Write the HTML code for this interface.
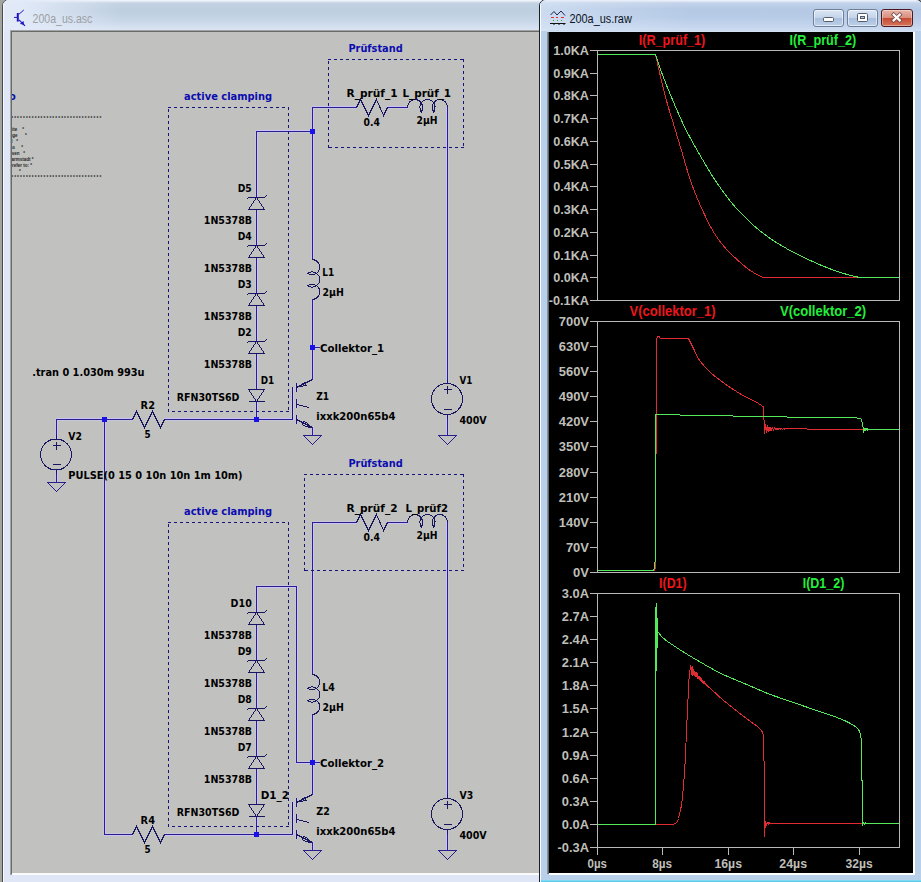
<!DOCTYPE html><html><head><meta charset="utf-8"><title>LTspice</title><style>
html,body{margin:0;padding:0;background:#a2a49f;}body{width:921px;height:882px;position:relative;overflow:hidden;font-family:'Liberation Sans',sans-serif}
svg{position:absolute;left:0;top:0}
</style></head><body>
<div id="lw" style="position:absolute;left:2px;top:-1px;width:560px;height:900px;border:1px solid #4a4d4e;border-radius:7px;box-sizing:border-box;background:#dfe6f5;overflow:hidden">
<div style="position:absolute;left:0;top:0;width:560px;height:31px;background:linear-gradient(to bottom,#f4f7fb 0,#e9eff7 1px,#c3d2e2 3px,#bccedf 11px,#c8d7e8 21px,#d9e4f3 29px,#d9e4f3 31px)"></div>
<div style="position:absolute;left:0;top:0;width:120px;height:31px;background:linear-gradient(to right,rgba(226,234,248,1) 0,rgba(226,234,248,.95) 20px,rgba(226,234,248,0) 120px)"></div>
<div style="position:absolute;left:0;top:0;width:1px;height:900px;background:#f6f8fc"></div>
<div style="position:absolute;left:1px;top:31px;width:8px;height:870px;background:#dfe6f5"></div>
</div>
<div style="position:absolute;left:10px;top:30px;width:540px;height:845px;background:#a3a5a4"></div>
<div style="position:absolute;left:11px;top:31px;width:540px;height:843px;background:#686b6a"></div>
<div style="position:absolute;left:12px;top:873px;width:540px;height:2px;background:#fafbfd"></div>
<div style="position:absolute;left:12px;top:32px;width:527px;height:841px;background:#c1c2bf"></div>
<svg width="120" height="32" viewBox="0 0 120 32" style="position:absolute;left:0;top:0">
<text x="32.6" y="22.8" font-family="'Liberation Sans',sans-serif" font-size="12" fill="#9c9fa4" textLength="59.8" lengthAdjust="spacingAndGlyphs">200a_us.asc</text>
<g stroke="#1c14c0" fill="none">
<path d="M17.8,13 V21.6" stroke-width="2"/>
<path d="M14,17.4 H17" stroke-width="1"/>
<path d="M19,14.2 L23.8,10" stroke-width="1"/>
<path d="M19,19.8 L25,25.8" stroke-width="1.2"/>
<path d="M20.4,23.6 L23.4,21.6 L23.6,24.6 Z" fill="#1c14c0" stroke-width="0.6"/>
</g></svg>

<svg width="921" height="882" viewBox="0 0 921 882">
<defs><clipPath id="cl"><rect x="12" y="32" width="527" height="841"/></clipPath></defs>
<g clip-path="url(#cl)">
<g shape-rendering="crispEdges" fill="#c8c2f8"><rect x="257" y="187" width="1" height="11"/><rect x="255" y="187" width="1" height="11" fill="#c6c5da"/><rect x="257" y="209" width="1" height="11"/><rect x="255" y="209" width="1" height="11" fill="#c6c5da"/><rect x="257" y="219" width="1" height="17"/><rect x="255" y="219" width="1" height="17" fill="#c6c5da"/><rect x="257" y="235" width="1" height="11"/><rect x="255" y="235" width="1" height="11" fill="#c6c5da"/><rect x="257" y="257" width="1" height="11"/><rect x="255" y="257" width="1" height="11" fill="#c6c5da"/><rect x="257" y="267" width="1" height="17"/><rect x="255" y="267" width="1" height="17" fill="#c6c5da"/><rect x="257" y="283" width="1" height="11"/><rect x="255" y="283" width="1" height="11" fill="#c6c5da"/><rect x="257" y="305" width="1" height="11"/><rect x="255" y="305" width="1" height="11" fill="#c6c5da"/><rect x="257" y="315" width="1" height="17"/><rect x="255" y="315" width="1" height="17" fill="#c6c5da"/><rect x="257" y="331" width="1" height="11"/><rect x="255" y="331" width="1" height="11" fill="#c6c5da"/><rect x="257" y="353" width="1" height="11"/><rect x="255" y="353" width="1" height="11" fill="#c6c5da"/><rect x="257" y="363" width="1" height="17"/><rect x="255" y="363" width="1" height="17" fill="#c6c5da"/><rect x="257" y="379" width="1" height="11"/><rect x="255" y="379" width="1" height="11" fill="#c6c5da"/><rect x="257" y="401" width="1" height="11"/><rect x="255" y="401" width="1" height="11" fill="#c6c5da"/><rect x="257" y="411" width="1" height="9"/><rect x="255" y="411" width="1" height="9" fill="#c6c5da"/><rect x="256" y="130" width="57" height="1"/><rect x="256" y="132" width="57" height="1" fill="#c6c5da"/><rect x="257" y="131" width="1" height="57"/><rect x="255" y="131" width="1" height="57" fill="#c6c5da"/><rect x="313" y="107" width="1" height="153"/><rect x="311" y="107" width="1" height="153" fill="#c6c5da"/><rect x="313" y="299" width="1" height="81"/><rect x="311" y="299" width="1" height="81" fill="#c6c5da"/><rect x="312" y="346" width="8" height="1"/><rect x="312" y="348" width="8" height="1" fill="#c6c5da"/><rect x="312" y="106" width="41" height="1"/><rect x="312" y="108" width="41" height="1" fill="#c6c5da"/><rect x="352" y="106" width="5" height="1"/><rect x="352" y="108" width="5" height="1" fill="#c6c5da"/><rect x="387" y="106" width="5" height="1"/><rect x="387" y="108" width="5" height="1" fill="#c6c5da"/><rect x="391" y="106" width="17" height="1"/><rect x="391" y="108" width="17" height="1" fill="#c6c5da"/><rect x="446" y="107" width="1" height="273"/><rect x="448" y="107" width="1" height="273" fill="#c6c5da"/><rect x="446" y="379" width="1" height="5"/><rect x="448" y="379" width="1" height="5" fill="#c6c5da"/><rect x="446" y="415" width="1" height="5"/><rect x="448" y="415" width="1" height="5" fill="#c6c5da"/><rect x="446" y="419" width="1" height="17"/><rect x="448" y="419" width="1" height="17" fill="#c6c5da"/><rect x="293" y="387" width="1" height="33"/><rect x="291" y="387" width="1" height="33" fill="#c6c5da"/><rect x="297" y="383" width="1" height="9"/><rect x="295" y="383" width="1" height="9" fill="#c6c5da"/><rect x="297" y="399" width="1" height="9"/><rect x="295" y="399" width="1" height="9" fill="#c6c5da"/><rect x="297" y="415" width="1" height="9"/><rect x="295" y="415" width="1" height="9" fill="#c6c5da"/><rect x="313" y="427" width="1" height="9"/><rect x="311" y="427" width="1" height="9" fill="#c6c5da"/><rect x="128" y="418" width="5" height="1"/><rect x="128" y="420" width="5" height="1" fill="#c6c5da"/><rect x="164" y="418" width="5" height="1"/><rect x="164" y="420" width="5" height="1" fill="#c6c5da"/><rect x="168" y="418" width="125" height="1"/><rect x="168" y="420" width="125" height="1" fill="#c6c5da"/><rect x="257" y="602" width="1" height="11"/><rect x="255" y="602" width="1" height="11" fill="#c6c5da"/><rect x="257" y="624" width="1" height="11"/><rect x="255" y="624" width="1" height="11" fill="#c6c5da"/><rect x="257" y="634" width="1" height="17"/><rect x="255" y="634" width="1" height="17" fill="#c6c5da"/><rect x="257" y="650" width="1" height="11"/><rect x="255" y="650" width="1" height="11" fill="#c6c5da"/><rect x="257" y="672" width="1" height="11"/><rect x="255" y="672" width="1" height="11" fill="#c6c5da"/><rect x="257" y="682" width="1" height="17"/><rect x="255" y="682" width="1" height="17" fill="#c6c5da"/><rect x="257" y="698" width="1" height="11"/><rect x="255" y="698" width="1" height="11" fill="#c6c5da"/><rect x="257" y="720" width="1" height="11"/><rect x="255" y="720" width="1" height="11" fill="#c6c5da"/><rect x="257" y="730" width="1" height="17"/><rect x="255" y="730" width="1" height="17" fill="#c6c5da"/><rect x="257" y="746" width="1" height="11"/><rect x="255" y="746" width="1" height="11" fill="#c6c5da"/><rect x="257" y="768" width="1" height="11"/><rect x="255" y="768" width="1" height="11" fill="#c6c5da"/><rect x="257" y="778" width="1" height="17"/><rect x="255" y="778" width="1" height="17" fill="#c6c5da"/><rect x="257" y="794" width="1" height="11"/><rect x="255" y="794" width="1" height="11" fill="#c6c5da"/><rect x="257" y="816" width="1" height="11"/><rect x="255" y="816" width="1" height="11" fill="#c6c5da"/><rect x="257" y="826" width="1" height="9"/><rect x="255" y="826" width="1" height="9" fill="#c6c5da"/><rect x="256" y="587" width="41" height="1"/><rect x="256" y="585" width="41" height="1" fill="#c6c5da"/><rect x="257" y="586" width="1" height="17"/><rect x="255" y="586" width="1" height="17" fill="#c6c5da"/><rect x="297" y="586" width="1" height="177"/><rect x="295" y="586" width="1" height="177" fill="#c6c5da"/><rect x="296" y="763" width="17" height="1"/><rect x="296" y="761" width="17" height="1" fill="#c6c5da"/><rect x="313" y="522" width="1" height="153"/><rect x="311" y="522" width="1" height="153" fill="#c6c5da"/><rect x="313" y="714" width="1" height="81"/><rect x="311" y="714" width="1" height="81" fill="#c6c5da"/><rect x="312" y="763" width="8" height="1"/><rect x="312" y="761" width="8" height="1" fill="#c6c5da"/><rect x="312" y="523" width="41" height="1"/><rect x="312" y="521" width="41" height="1" fill="#c6c5da"/><rect x="352" y="523" width="5" height="1"/><rect x="352" y="521" width="5" height="1" fill="#c6c5da"/><rect x="387" y="523" width="5" height="1"/><rect x="387" y="521" width="5" height="1" fill="#c6c5da"/><rect x="391" y="523" width="17" height="1"/><rect x="391" y="521" width="17" height="1" fill="#c6c5da"/><rect x="446" y="522" width="1" height="273"/><rect x="448" y="522" width="1" height="273" fill="#c6c5da"/><rect x="446" y="794" width="1" height="5"/><rect x="448" y="794" width="1" height="5" fill="#c6c5da"/><rect x="446" y="830" width="1" height="5"/><rect x="448" y="830" width="1" height="5" fill="#c6c5da"/><rect x="446" y="834" width="1" height="17"/><rect x="448" y="834" width="1" height="17" fill="#c6c5da"/><rect x="293" y="802" width="1" height="33"/><rect x="291" y="802" width="1" height="33" fill="#c6c5da"/><rect x="297" y="798" width="1" height="9"/><rect x="295" y="798" width="1" height="9" fill="#c6c5da"/><rect x="297" y="814" width="1" height="9"/><rect x="295" y="814" width="1" height="9" fill="#c6c5da"/><rect x="297" y="830" width="1" height="9"/><rect x="295" y="830" width="1" height="9" fill="#c6c5da"/><rect x="313" y="842" width="1" height="9"/><rect x="311" y="842" width="1" height="9" fill="#c6c5da"/><rect x="128" y="835" width="5" height="1"/><rect x="128" y="833" width="5" height="1" fill="#c6c5da"/><rect x="164" y="835" width="5" height="1"/><rect x="164" y="833" width="5" height="1" fill="#c6c5da"/><rect x="168" y="835" width="125" height="1"/><rect x="168" y="833" width="125" height="1" fill="#c6c5da"/><rect x="56" y="418" width="73" height="1"/><rect x="56" y="420" width="73" height="1" fill="#c6c5da"/><rect x="57" y="419" width="1" height="17"/><rect x="55" y="419" width="1" height="17" fill="#c6c5da"/><rect x="57" y="435" width="1" height="5"/><rect x="55" y="435" width="1" height="5" fill="#c6c5da"/><rect x="57" y="470" width="1" height="5"/><rect x="55" y="470" width="1" height="5" fill="#c6c5da"/><rect x="57" y="474" width="1" height="9"/><rect x="55" y="474" width="1" height="9" fill="#c6c5da"/><rect x="105" y="419" width="1" height="416"/><rect x="103" y="419" width="1" height="416" fill="#c6c5da"/><rect x="104" y="835" width="25" height="1"/><rect x="104" y="833" width="25" height="1" fill="#c6c5da"/></g>
<g shape-rendering="crispEdges"><rect x="256" y="187" width="1" height="11" fill="#2a1e8c"/><rect x="256" y="209" width="1" height="11" fill="#2a1e8c"/><polygon points="248.5,209.5 264.5,209.5 256.5,197.5" fill="none" stroke="#17165f" stroke-width="1"/><polyline points="246.5,199.5 248.5,197.5 264.5,197.5 266.5,195.5" fill="none" stroke="#17165f" stroke-width="1"/><rect x="256" y="219" width="1" height="17" fill="#2a1e8c"/><rect x="256" y="235" width="1" height="11" fill="#2a1e8c"/><rect x="256" y="257" width="1" height="11" fill="#2a1e8c"/><polygon points="248.5,257.5 264.5,257.5 256.5,245.5" fill="none" stroke="#17165f" stroke-width="1"/><polyline points="246.5,247.5 248.5,245.5 264.5,245.5 266.5,243.5" fill="none" stroke="#17165f" stroke-width="1"/><rect x="256" y="267" width="1" height="17" fill="#2a1e8c"/><rect x="256" y="283" width="1" height="11" fill="#2a1e8c"/><rect x="256" y="305" width="1" height="11" fill="#2a1e8c"/><polygon points="248.5,305.5 264.5,305.5 256.5,293.5" fill="none" stroke="#17165f" stroke-width="1"/><polyline points="246.5,295.5 248.5,293.5 264.5,293.5 266.5,291.5" fill="none" stroke="#17165f" stroke-width="1"/><rect x="256" y="315" width="1" height="17" fill="#2a1e8c"/><rect x="256" y="331" width="1" height="11" fill="#2a1e8c"/><rect x="256" y="353" width="1" height="11" fill="#2a1e8c"/><polygon points="248.5,353.5 264.5,353.5 256.5,341.5" fill="none" stroke="#17165f" stroke-width="1"/><polyline points="246.5,343.5 248.5,341.5 264.5,341.5 266.5,339.5" fill="none" stroke="#17165f" stroke-width="1"/><rect x="256" y="363" width="1" height="17" fill="#2a1e8c"/><rect x="256" y="379" width="1" height="11" fill="#2a1e8c"/><rect x="256" y="401" width="1" height="11" fill="#2a1e8c"/><polygon points="248.5,389.5 264.5,389.5 256.5,401.5" fill="none" stroke="#17165f" stroke-width="1"/><polyline points="248.5,401.5 264.5,401.5" fill="none" stroke="#17165f" stroke-width="1"/><rect x="256" y="411" width="1" height="9" fill="#2a1e8c"/><rect x="256" y="131" width="57" height="1" fill="#2a1e8c"/><rect x="256" y="131" width="1" height="57" fill="#2a1e8c"/><rect x="312" y="107" width="1" height="153" fill="#2a1e8c"/><path d="M312.5,259.5 A8.0,7.6 0 1 1 307.27,273.30 A8.0,7.6 0 1 1 307.27,285.70 A8.0,7.6 0 1 1 312.5,299.5" fill="none" stroke="#17165f" stroke-width="1"/><rect x="312" y="299" width="1" height="81" fill="#2a1e8c"/><rect x="312" y="347" width="8" height="1" fill="#2a1e8c"/><rect x="312" y="107" width="41" height="1" fill="#2a1e8c"/><rect x="352" y="107" width="5" height="1" fill="#2a1e8c"/><rect x="387" y="107" width="5" height="1" fill="#2a1e8c"/><polyline points="356.5,107.5 360.5,99.5 368.5,115.5 376.5,99.5 383.5,115.5 387.5,107.5" fill="none" stroke="#17165f" stroke-width="1"/><rect x="391" y="107" width="17" height="1" fill="#2a1e8c"/><path d="M407.5,107.5 A7.6,8.0 0 1 1 421.30,112.13 A7.6,8.0 0 1 1 433.70,112.13 A7.6,8.0 0 1 1 447.5,107.5" fill="none" stroke="#17165f" stroke-width="1"/><rect x="447" y="107" width="1" height="273" fill="#2a1e8c"/><rect x="447" y="379" width="1" height="5" fill="#17165f"/><rect x="447" y="415" width="1" height="5" fill="#17165f"/><circle cx="447.0" cy="399.0" r="15.5" fill="none" stroke="#17165f" stroke-width="1"/><polyline points="443.5,389.5 451.5,389.5" fill="none" stroke="#17165f" stroke-width="1"/><polyline points="447.5,385.5 447.5,393.5" fill="none" stroke="#17165f" stroke-width="1"/><polyline points="443.5,409.5 451.5,409.5" fill="none" stroke="#17165f" stroke-width="1"/><rect x="447" y="419" width="1" height="17" fill="#2a1e8c"/><polygon points="438.5,435.5 456.5,435.5 447.5,444.5" fill="none" stroke="#2a1e8c" stroke-width="1"/><rect x="292" y="387" width="1" height="33" fill="#17165f"/><rect x="296" y="383" width="1" height="9" fill="#17165f"/><rect x="296" y="399" width="1" height="9" fill="#17165f"/><rect x="296" y="415" width="1" height="9" fill="#17165f"/><polyline points="296.5,387.5 312.5,379.5" fill="none" stroke="#17165f" stroke-width="1"/><polyline points="299.5,386.5 306.5,385.5 304.5,382.5 299.5,386.5" fill="none" stroke="#17165f" stroke-width="1"/><polyline points="296.5,404.5 309.5,407.5" fill="none" stroke="#17165f" stroke-width="1"/><polyline points="296.5,419.5 312.5,427.5" fill="none" stroke="#17165f" stroke-width="1"/><polyline points="311.5,427.5 306.5,422.5 303.5,421.5 302.5,424.5 305.5,426.5 311.5,427.5" fill="none" stroke="#17165f" stroke-width="1"/><rect x="312" y="427" width="1" height="9" fill="#2a1e8c"/><polygon points="303.5,435.5 321.5,435.5 312.5,444.5" fill="none" stroke="#2a1e8c" stroke-width="1"/><rect x="128" y="419" width="5" height="1" fill="#2a1e8c"/><rect x="164" y="419" width="5" height="1" fill="#2a1e8c"/><polyline points="132.5,419.5 136.5,411.5 144.5,427.5 152.5,411.5 160.5,427.5 164.5,419.5" fill="none" stroke="#17165f" stroke-width="1"/><rect x="168" y="419" width="125" height="1" fill="#2a1e8c"/><rect x="256" y="602" width="1" height="11" fill="#2a1e8c"/><rect x="256" y="624" width="1" height="11" fill="#2a1e8c"/><polygon points="248.5,624.5 264.5,624.5 256.5,612.5" fill="none" stroke="#17165f" stroke-width="1"/><polyline points="246.5,614.5 248.5,612.5 264.5,612.5 266.5,610.5" fill="none" stroke="#17165f" stroke-width="1"/><rect x="256" y="634" width="1" height="17" fill="#2a1e8c"/><rect x="256" y="650" width="1" height="11" fill="#2a1e8c"/><rect x="256" y="672" width="1" height="11" fill="#2a1e8c"/><polygon points="248.5,672.5 264.5,672.5 256.5,660.5" fill="none" stroke="#17165f" stroke-width="1"/><polyline points="246.5,662.5 248.5,660.5 264.5,660.5 266.5,658.5" fill="none" stroke="#17165f" stroke-width="1"/><rect x="256" y="682" width="1" height="17" fill="#2a1e8c"/><rect x="256" y="698" width="1" height="11" fill="#2a1e8c"/><rect x="256" y="720" width="1" height="11" fill="#2a1e8c"/><polygon points="248.5,720.5 264.5,720.5 256.5,708.5" fill="none" stroke="#17165f" stroke-width="1"/><polyline points="246.5,710.5 248.5,708.5 264.5,708.5 266.5,706.5" fill="none" stroke="#17165f" stroke-width="1"/><rect x="256" y="730" width="1" height="17" fill="#2a1e8c"/><rect x="256" y="746" width="1" height="11" fill="#2a1e8c"/><rect x="256" y="768" width="1" height="11" fill="#2a1e8c"/><polygon points="248.5,768.5 264.5,768.5 256.5,756.5" fill="none" stroke="#17165f" stroke-width="1"/><polyline points="246.5,758.5 248.5,756.5 264.5,756.5 266.5,754.5" fill="none" stroke="#17165f" stroke-width="1"/><rect x="256" y="778" width="1" height="17" fill="#2a1e8c"/><rect x="256" y="794" width="1" height="11" fill="#2a1e8c"/><rect x="256" y="816" width="1" height="11" fill="#2a1e8c"/><polygon points="248.5,804.5 264.5,804.5 256.5,816.5" fill="none" stroke="#17165f" stroke-width="1"/><polyline points="248.5,816.5 264.5,816.5" fill="none" stroke="#17165f" stroke-width="1"/><rect x="256" y="826" width="1" height="9" fill="#2a1e8c"/><rect x="256" y="586" width="41" height="1" fill="#2a1e8c"/><rect x="256" y="586" width="1" height="17" fill="#2a1e8c"/><rect x="296" y="586" width="1" height="177" fill="#2a1e8c"/><rect x="296" y="762" width="17" height="1" fill="#2a1e8c"/><rect x="312" y="522" width="1" height="153" fill="#2a1e8c"/><path d="M312.5,674.5 A8.0,7.6 0 1 1 307.27,688.30 A8.0,7.6 0 1 1 307.27,700.70 A8.0,7.6 0 1 1 312.5,714.5" fill="none" stroke="#17165f" stroke-width="1"/><rect x="312" y="714" width="1" height="81" fill="#2a1e8c"/><rect x="312" y="762" width="8" height="1" fill="#2a1e8c"/><rect x="312" y="522" width="41" height="1" fill="#2a1e8c"/><rect x="352" y="522" width="5" height="1" fill="#2a1e8c"/><rect x="387" y="522" width="5" height="1" fill="#2a1e8c"/><polyline points="356.5,522.5 360.5,514.5 368.5,530.5 376.5,514.5 383.5,530.5 387.5,522.5" fill="none" stroke="#17165f" stroke-width="1"/><rect x="391" y="522" width="17" height="1" fill="#2a1e8c"/><path d="M407.5,522.5 A7.6,8.0 0 1 1 421.30,527.13 A7.6,8.0 0 1 1 433.70,527.13 A7.6,8.0 0 1 1 447.5,522.5" fill="none" stroke="#17165f" stroke-width="1"/><rect x="447" y="522" width="1" height="273" fill="#2a1e8c"/><rect x="447" y="794" width="1" height="5" fill="#17165f"/><rect x="447" y="830" width="1" height="5" fill="#17165f"/><circle cx="447.0" cy="814.0" r="15.5" fill="none" stroke="#17165f" stroke-width="1"/><polyline points="443.5,804.5 451.5,804.5" fill="none" stroke="#17165f" stroke-width="1"/><polyline points="447.5,800.5 447.5,808.5" fill="none" stroke="#17165f" stroke-width="1"/><polyline points="443.5,824.5 451.5,824.5" fill="none" stroke="#17165f" stroke-width="1"/><rect x="447" y="834" width="1" height="17" fill="#2a1e8c"/><polygon points="438.5,850.5 456.5,850.5 447.5,859.5" fill="none" stroke="#2a1e8c" stroke-width="1"/><rect x="292" y="802" width="1" height="33" fill="#17165f"/><rect x="296" y="798" width="1" height="9" fill="#17165f"/><rect x="296" y="814" width="1" height="9" fill="#17165f"/><rect x="296" y="830" width="1" height="9" fill="#17165f"/><polyline points="296.5,802.5 312.5,794.5" fill="none" stroke="#17165f" stroke-width="1"/><polyline points="299.5,801.5 306.5,800.5 304.5,797.5 299.5,801.5" fill="none" stroke="#17165f" stroke-width="1"/><polyline points="296.5,819.5 309.5,822.5" fill="none" stroke="#17165f" stroke-width="1"/><polyline points="296.5,834.5 312.5,842.5" fill="none" stroke="#17165f" stroke-width="1"/><polyline points="311.5,842.5 306.5,837.5 303.5,836.5 302.5,839.5 305.5,841.5 311.5,842.5" fill="none" stroke="#17165f" stroke-width="1"/><rect x="312" y="842" width="1" height="9" fill="#2a1e8c"/><polygon points="303.5,850.5 321.5,850.5 312.5,859.5" fill="none" stroke="#2a1e8c" stroke-width="1"/><rect x="128" y="834" width="5" height="1" fill="#2a1e8c"/><rect x="164" y="834" width="5" height="1" fill="#2a1e8c"/><polyline points="132.5,834.5 136.5,826.5 144.5,842.5 152.5,826.5 160.5,842.5 164.5,834.5" fill="none" stroke="#17165f" stroke-width="1"/><rect x="168" y="834" width="125" height="1" fill="#2a1e8c"/><line x1="168" y1="107.5" x2="289" y2="107.5" stroke="#15147c" stroke-width="1" stroke-dasharray="3 3"/><line x1="288.5" y1="107" x2="288.5" y2="412" stroke="#15147c" stroke-width="1" stroke-dasharray="3 3"/><line x1="289" y1="411.5" x2="168" y2="411.5" stroke="#15147c" stroke-width="1" stroke-dasharray="3 3"/><line x1="168.5" y1="412" x2="168.5" y2="107" stroke="#15147c" stroke-width="1" stroke-dasharray="3 3"/><line x1="168" y1="522.5" x2="289" y2="522.5" stroke="#15147c" stroke-width="1" stroke-dasharray="3 3"/><line x1="288.5" y1="522" x2="288.5" y2="827" stroke="#15147c" stroke-width="1" stroke-dasharray="3 3"/><line x1="289" y1="826.5" x2="168" y2="826.5" stroke="#15147c" stroke-width="1" stroke-dasharray="3 3"/><line x1="168.5" y1="827" x2="168.5" y2="522" stroke="#15147c" stroke-width="1" stroke-dasharray="3 3"/><line x1="328" y1="59.5" x2="464" y2="59.5" stroke="#15147c" stroke-width="1" stroke-dasharray="3 3"/><line x1="463.5" y1="59" x2="463.5" y2="148" stroke="#15147c" stroke-width="1" stroke-dasharray="3 3"/><line x1="464" y1="147.5" x2="328" y2="147.5" stroke="#15147c" stroke-width="1" stroke-dasharray="3 3"/><line x1="328.5" y1="148" x2="328.5" y2="59" stroke="#15147c" stroke-width="1" stroke-dasharray="3 3"/><line x1="304" y1="474.5" x2="464" y2="474.5" stroke="#15147c" stroke-width="1" stroke-dasharray="3 3"/><line x1="463.5" y1="474" x2="463.5" y2="571" stroke="#15147c" stroke-width="1" stroke-dasharray="3 3"/><line x1="464" y1="570.5" x2="304" y2="570.5" stroke="#15147c" stroke-width="1" stroke-dasharray="3 3"/><line x1="304.5" y1="571" x2="304.5" y2="474" stroke="#15147c" stroke-width="1" stroke-dasharray="3 3"/><rect x="56" y="419" width="73" height="1" fill="#2a1e8c"/><rect x="56" y="419" width="1" height="17" fill="#2a1e8c"/><rect x="56" y="435" width="1" height="5" fill="#17165f"/><rect x="56" y="470" width="1" height="5" fill="#17165f"/><circle cx="56.0" cy="454.5" r="15.5" fill="none" stroke="#17165f" stroke-width="1"/><polyline points="52.5,445.5 60.5,445.5" fill="none" stroke="#17165f" stroke-width="1"/><polyline points="56.5,441.5 56.5,449.5" fill="none" stroke="#17165f" stroke-width="1"/><polyline points="52.5,464.5 60.5,464.5" fill="none" stroke="#17165f" stroke-width="1"/><rect x="56" y="474" width="1" height="9" fill="#2a1e8c"/><polygon points="47.5,482.5 65.5,482.5 56.5,491.5" fill="none" stroke="#2a1e8c" stroke-width="1"/><rect x="104" y="419" width="1" height="416" fill="#2a1e8c"/><rect x="104" y="834" width="25" height="1" fill="#2a1e8c"/><rect x="254" y="417" width="5" height="5" fill="#1a10e8"/><rect x="310" y="129" width="5" height="5" fill="#1a10e8"/><rect x="310" y="345" width="5" height="5" fill="#1a10e8"/><rect x="254" y="832" width="5" height="5" fill="#1a10e8"/><rect x="310" y="760" width="5" height="5" fill="#1a10e8"/><rect x="102" y="417" width="5" height="5" fill="#1a10e8"/></g>
<g font-family="'DejaVu Sans Condensed','Liberation Sans',sans-serif" font-weight="bold" font-size="11" fill="#000"><text x="251.8" y="192" textLength="14.1" lengthAdjust="spacingAndGlyphs" text-anchor="end">D5</text><text x="203.8" y="224" textLength="48.3" lengthAdjust="spacingAndGlyphs">1N5378B</text><text x="251.8" y="240" textLength="14.1" lengthAdjust="spacingAndGlyphs" text-anchor="end">D4</text><text x="203.8" y="272" textLength="48.3" lengthAdjust="spacingAndGlyphs">1N5378B</text><text x="251.8" y="288" textLength="14.1" lengthAdjust="spacingAndGlyphs" text-anchor="end">D3</text><text x="203.8" y="320" textLength="48.3" lengthAdjust="spacingAndGlyphs">1N5378B</text><text x="251.8" y="336" textLength="14.1" lengthAdjust="spacingAndGlyphs" text-anchor="end">D2</text><text x="203.8" y="368" textLength="48.3" lengthAdjust="spacingAndGlyphs">1N5378B</text><text x="260.7" y="384" textLength="13.5" lengthAdjust="spacingAndGlyphs">D1</text><text x="176.7" y="401" textLength="62.8" lengthAdjust="spacingAndGlyphs">RFN30TS6D</text><text x="320.1" y="352" textLength="64" lengthAdjust="spacingAndGlyphs">Collektor_1</text><text x="322.3" y="276" textLength="11.9" lengthAdjust="spacingAndGlyphs">L1</text><text x="322.5" y="296" textLength="21.3" lengthAdjust="spacingAndGlyphs">2µH</text><text x="346.6" y="97" textLength="51.0" lengthAdjust="spacingAndGlyphs">R_prüf_1</text><text x="402.4" y="97" textLength="48.7" lengthAdjust="spacingAndGlyphs">L_prüf_1</text><text x="363.6" y="126" textLength="16.4" lengthAdjust="spacingAndGlyphs">0.4</text><text x="416.6" y="124" textLength="21" lengthAdjust="spacingAndGlyphs">2µH</text><text x="459.5" y="384" textLength="12.9" lengthAdjust="spacingAndGlyphs">V1</text><text x="459.5" y="424" textLength="27.2" lengthAdjust="spacingAndGlyphs">400V</text><text x="316.3" y="400" textLength="12.8" lengthAdjust="spacingAndGlyphs">Z1</text><text x="316.3" y="420" textLength="79.2" lengthAdjust="spacingAndGlyphs">ixxk200n65b4</text><text x="140.6" y="409" textLength="14.4" lengthAdjust="spacingAndGlyphs">R2</text><text x="144.6" y="438" textLength="6.1" lengthAdjust="spacingAndGlyphs">5</text><text x="184.1" y="100" fill="#0c0cb0" textLength="88" lengthAdjust="spacingAndGlyphs">active clamping</text><text x="348.4" y="52" fill="#0c0cb0" textLength="54.3" lengthAdjust="spacingAndGlyphs">Prüfstand</text><text x="251.8" y="607" textLength="21.2" lengthAdjust="spacingAndGlyphs" text-anchor="end">D10</text><text x="203.8" y="639" textLength="48.3" lengthAdjust="spacingAndGlyphs">1N5378B</text><text x="251.8" y="655" textLength="14.1" lengthAdjust="spacingAndGlyphs" text-anchor="end">D9</text><text x="203.8" y="687" textLength="48.3" lengthAdjust="spacingAndGlyphs">1N5378B</text><text x="251.8" y="703" textLength="14.1" lengthAdjust="spacingAndGlyphs" text-anchor="end">D8</text><text x="203.8" y="735" textLength="48.3" lengthAdjust="spacingAndGlyphs">1N5378B</text><text x="251.8" y="751" textLength="14.1" lengthAdjust="spacingAndGlyphs" text-anchor="end">D7</text><text x="203.8" y="783" textLength="48.3" lengthAdjust="spacingAndGlyphs">1N5378B</text><text x="260.7" y="799" textLength="28.3" lengthAdjust="spacingAndGlyphs">D1_2</text><text x="176.7" y="816" textLength="62.8" lengthAdjust="spacingAndGlyphs">RFN30TS6D</text><text x="320.1" y="767" textLength="64" lengthAdjust="spacingAndGlyphs">Collektor_2</text><text x="322.3" y="691" textLength="12.6" lengthAdjust="spacingAndGlyphs">L4</text><text x="322.5" y="711" textLength="21.3" lengthAdjust="spacingAndGlyphs">2µH</text><text x="346.6" y="512" textLength="51.0" lengthAdjust="spacingAndGlyphs">R_prüf_2</text><text x="405.5" y="512" textLength="42.5" lengthAdjust="spacingAndGlyphs">L_prüf2</text><text x="363.6" y="541" textLength="16.4" lengthAdjust="spacingAndGlyphs">0.4</text><text x="416.6" y="539" textLength="21" lengthAdjust="spacingAndGlyphs">2µH</text><text x="459.5" y="799" textLength="13.7" lengthAdjust="spacingAndGlyphs">V3</text><text x="459.5" y="839" textLength="27.2" lengthAdjust="spacingAndGlyphs">400V</text><text x="316.3" y="815" textLength="13.5" lengthAdjust="spacingAndGlyphs">Z2</text><text x="316.3" y="835" textLength="79.2" lengthAdjust="spacingAndGlyphs">ixxk200n65b4</text><text x="140.6" y="824" textLength="14.4" lengthAdjust="spacingAndGlyphs">R4</text><text x="144.6" y="853" textLength="6.1" lengthAdjust="spacingAndGlyphs">5</text><text x="184.1" y="515" fill="#0c0cb0" textLength="88" lengthAdjust="spacingAndGlyphs">active clamping</text><text x="348.4" y="467" fill="#0c0cb0" textLength="54.3" lengthAdjust="spacingAndGlyphs">Prüfstand</text><text x="68.3" y="440" textLength="13.7" lengthAdjust="spacingAndGlyphs">V2</text><text x="68.3" y="479" textLength="174.3" lengthAdjust="spacingAndGlyphs">PULSE(0 15 0 10n 10n 1m 10m)</text><text x="32.2" y="376" textLength="112.4" lengthAdjust="spacingAndGlyphs">.tran 0 1.030m 993u</text><text x="9.0" y="100" fill="#0c0cb0">o</text></g>
<g font-family="'Liberation Sans',sans-serif" font-size="4.6" fill="#222" font-weight="bold">
<text x="11.2" y="119.6" textLength="90" lengthAdjust="spacing">*******************************</text>
<text x="11.2" y="179.4" textLength="90" lengthAdjust="spacing">*******************************</text>
</g>
<g font-family="'Liberation Sans',sans-serif" font-size="4.5" fill="#262626" font-weight="bold">
<text x="9.6" y="131" xml:space="preserve">site    *</text>
<text x="9.7" y="137" xml:space="preserve">age      *</text>
<text x="11.3" y="143" xml:space="preserve">l   *</text>
<text x="10.1" y="149" xml:space="preserve">as     *</text>
<text x="6.4" y="155" xml:space="preserve">haven   *</text>
<text x="2.9" y="161" xml:space="preserve">tu-darmstadt *</text>
<text x="8.9" y="167" xml:space="preserve">* refer to: *</text>
<text x="12.7" y="173" xml:space="preserve">     *</text>
</g>

</g></svg>
<div id="rw" style="position:absolute;left:539px;top:-1px;width:384px;height:900px;border:1px solid #1c1e26;border-radius:7px 7px 0 0;box-sizing:border-box;background:#b9d0ea;overflow:hidden">
<div style="position:absolute;left:0;top:0;width:400px;height:31px;background:linear-gradient(to bottom,#f4f7fc 0,#e2eaf6 1px,#c3d3ea 3px,#b5c9e5 9px,#b7cbe7 17px,#c4d5ed 26px,#cfddf2 31px)"></div>
<div style="position:absolute;left:0;top:0;width:150px;height:31px;background:linear-gradient(to right,rgba(222,233,248,.55) 0,rgba(222,233,248,.3) 60px,rgba(222,233,248,0) 150px)"></div>
<div style="position:absolute;left:0;top:0;width:1px;height:900px;background:#f8fbff"></div>
</div>
<div style="position:absolute;left:541px;top:880px;width:380px;height:2px;background:linear-gradient(to bottom,#8fe0f6,#4cc4e8)"></div>
<div style="position:absolute;left:547px;top:31px;width:2px;height:843px;background:linear-gradient(to right,#9aa6b4,#4e5258)"></div>
<div style="position:absolute;left:547px;top:30px;width:368px;height:2px;background:linear-gradient(to bottom,#c9d9ee,#d6e2f2)"></div>
<div style="position:absolute;left:549px;top:873px;width:366px;height:2px;background:#fff"></div>
<div style="position:absolute;left:913px;top:32px;width:2px;height:843px;background:#fff"></div>
<div style="position:absolute;left:549px;top:32px;width:364px;height:841px;background:#000"></div>
<!-- caption buttons -->
<div style="position:absolute;left:813px;top:9px;width:31px;height:18px;box-sizing:border-box;border:1px solid #6f7f98;border-radius:3px;background:linear-gradient(to bottom,#dbe6f4 0,#c4d4ea 48%,#a9bfdd 52%,#bdd0ea 100%);box-shadow:inset 0 0 0 1px rgba(255,255,255,.55)"></div>
<div style="position:absolute;left:847px;top:9px;width:31px;height:18px;box-sizing:border-box;border:1px solid #6f7f98;border-radius:3px;background:linear-gradient(to bottom,#dbe6f4 0,#c4d4ea 48%,#a9bfdd 52%,#bdd0ea 100%);box-shadow:inset 0 0 0 1px rgba(255,255,255,.55)"></div>
<div style="position:absolute;left:881px;top:9px;width:32px;height:18px;box-sizing:border-box;border:1px solid #4a1a22;border-radius:3px;background:linear-gradient(to bottom,#e8b6aa 0,#db8e7e 48%,#c64a31 52%,#d5765e 100%);box-shadow:inset 0 0 0 1px rgba(255,255,255,.35)"></div>
<svg width="921" height="40" viewBox="0 0 921 40" style="position:absolute;left:0;top:0">
<text x="569.4" y="22.6" font-family="'Liberation Sans',sans-serif" font-size="12" fill="#0a1424" textLength="62.4" lengthAdjust="spacingAndGlyphs">200a_us.raw</text>
<!-- minimize glyph -->
<rect x="823.5" y="17.5" width="10" height="4" rx="1" fill="#fff" stroke="#535a68" stroke-width="1"/>
<!-- maximize glyph -->
<rect x="857.5" y="13.5" width="10" height="8" rx="1" fill="#fff" stroke="#535a68" stroke-width="1"/>
<rect x="860.5" y="16.5" width="4" height="2" fill="#b9cce6" stroke="#535a68" stroke-width="1"/>
<!-- close glyph -->
<path d="M893.6,14.6 L899.8,20.4 M899.8,14.6 L893.6,20.4" stroke="#6e4540" stroke-width="3.8" stroke-linecap="square" fill="none"/><path d="M893.6,14.6 L899.8,20.4 M899.8,14.6 L893.6,20.4" stroke="#fff" stroke-width="2.2" stroke-linecap="square" fill="none"/>
<!-- waveform icon -->
<g fill="none" stroke-width="1">
<path d="M550.5,15 L554,11.5 L557,15 L561,11 L565,15.5" stroke="#23234e"/>
<path d="M551,17.5 h3 m2,0 h2 m3,0 h3" stroke="#e03030"/>
<path d="M553,20.5 h1 m3,0 h1 m3,0 h1" stroke="#30a030"/>
<path d="M550,23.5 H565.5" stroke="#111"/>
<path d="M553.5,24.5 h1 m4,0 h1 m4,0 h1" stroke="#111"/>
</g>
</svg>

<svg width="921" height="882" viewBox="0 0 921 882"><g shape-rendering="crispEdges"><rect x="597" y="50" width="303" height="1" fill="#b9b9b7"/><rect x="597" y="300" width="303" height="1" fill="#b9b9b7"/><rect x="597" y="50" width="1" height="251" fill="#b9b9b7"/><rect x="899" y="50" width="1" height="251" fill="#b9b9b7"/><rect x="590" y="50" width="8" height="1" fill="#b9b9b7"/><rect x="590" y="73" width="8" height="1" fill="#b9b9b7"/><rect x="590" y="95" width="8" height="1" fill="#b9b9b7"/><rect x="590" y="118" width="8" height="1" fill="#b9b9b7"/><rect x="590" y="141" width="8" height="1" fill="#b9b9b7"/><rect x="590" y="164" width="8" height="1" fill="#b9b9b7"/><rect x="590" y="186" width="8" height="1" fill="#b9b9b7"/><rect x="590" y="209" width="8" height="1" fill="#b9b9b7"/><rect x="590" y="232" width="8" height="1" fill="#b9b9b7"/><rect x="590" y="255" width="8" height="1" fill="#b9b9b7"/><rect x="590" y="277" width="8" height="1" fill="#b9b9b7"/><rect x="590" y="300" width="8" height="1" fill="#b9b9b7"/><rect x="597" y="321" width="303" height="1" fill="#b9b9b7"/><rect x="597" y="572" width="303" height="1" fill="#b9b9b7"/><rect x="597" y="321" width="1" height="252" fill="#b9b9b7"/><rect x="899" y="321" width="1" height="252" fill="#b9b9b7"/><rect x="590" y="321" width="8" height="1" fill="#b9b9b7"/><rect x="590" y="346" width="8" height="1" fill="#b9b9b7"/><rect x="590" y="371" width="8" height="1" fill="#b9b9b7"/><rect x="590" y="396" width="8" height="1" fill="#b9b9b7"/><rect x="590" y="421" width="8" height="1" fill="#b9b9b7"/><rect x="590" y="446" width="8" height="1" fill="#b9b9b7"/><rect x="590" y="472" width="8" height="1" fill="#b9b9b7"/><rect x="590" y="497" width="8" height="1" fill="#b9b9b7"/><rect x="590" y="522" width="8" height="1" fill="#b9b9b7"/><rect x="590" y="547" width="8" height="1" fill="#b9b9b7"/><rect x="590" y="572" width="8" height="1" fill="#b9b9b7"/><rect x="597" y="593" width="303" height="1" fill="#b9b9b7"/><rect x="597" y="847" width="303" height="1" fill="#b9b9b7"/><rect x="597" y="593" width="1" height="255" fill="#b9b9b7"/><rect x="899" y="593" width="1" height="255" fill="#b9b9b7"/><rect x="590" y="593" width="8" height="1" fill="#b9b9b7"/><rect x="590" y="616" width="8" height="1" fill="#b9b9b7"/><rect x="590" y="639" width="8" height="1" fill="#b9b9b7"/><rect x="590" y="662" width="8" height="1" fill="#b9b9b7"/><rect x="590" y="685" width="8" height="1" fill="#b9b9b7"/><rect x="590" y="708" width="8" height="1" fill="#b9b9b7"/><rect x="590" y="732" width="8" height="1" fill="#b9b9b7"/><rect x="590" y="755" width="8" height="1" fill="#b9b9b7"/><rect x="590" y="778" width="8" height="1" fill="#b9b9b7"/><rect x="590" y="801" width="8" height="1" fill="#b9b9b7"/><rect x="590" y="824" width="8" height="1" fill="#b9b9b7"/><rect x="590" y="847" width="8" height="1" fill="#b9b9b7"/><rect x="597" y="847" width="1" height="8" fill="#b9b9b7"/><rect x="662" y="847" width="1" height="8" fill="#b9b9b7"/><rect x="728" y="847" width="1" height="8" fill="#b9b9b7"/><rect x="793" y="847" width="1" height="8" fill="#b9b9b7"/><rect x="859" y="847" width="1" height="8" fill="#b9b9b7"/></g><g shape-rendering="crispEdges"><polyline points="597.5,54.5 655.5,54.5 655.5,54.5 656.5,59.1 657.5,63.5 658.5,67.9 659.5,72.3 660.5,76.5 661.5,80.7 662.5,84.9 663.5,89.0 664.5,93.0 665.5,96.9 666.5,100.6 667.5,104.2 668.5,107.7 669.5,111.1 670.5,114.3 671.5,117.5 672.5,120.7 673.5,123.9 674.5,127.2 675.5,130.5 676.5,133.9 677.5,137.2 678.5,140.6 679.5,143.9 680.5,147.3 681.5,150.6 682.5,154.0 683.5,157.3 684.5,160.8 685.5,164.3 686.5,167.7 687.5,171.2 688.5,174.5 689.5,177.6 690.5,180.6 691.5,183.4 692.5,186.2 693.5,188.8 694.5,191.4 695.5,193.9 696.5,196.4 697.5,198.8 698.5,201.2 699.5,203.5 700.5,205.7 701.5,208.0 702.5,210.2 703.5,212.3 704.5,214.5 705.5,216.6 706.5,218.7 707.5,220.8 708.5,222.7 709.5,224.7 710.5,226.6 711.5,228.4 712.5,230.2 713.5,231.8 714.5,233.5 715.5,235.0 716.5,236.5 717.5,238.0 718.5,239.4 719.5,240.8 720.5,242.2 721.5,243.4 722.5,244.7 723.5,245.9 724.5,247.1 725.5,248.2 726.5,249.3 727.5,250.4 728.5,251.4 729.5,252.4 730.5,253.4 731.5,254.4 732.5,255.4 733.5,256.3 734.5,257.2 735.5,258.1 736.5,259.1 737.5,260.0 738.5,260.9 739.5,261.8 740.5,262.7 741.5,263.6 742.5,264.4 743.5,265.3 744.5,266.1 745.5,267.0 746.5,267.8 747.5,268.5 748.5,269.3 749.5,270.0 750.5,270.7 751.5,271.3 752.5,271.9 753.5,272.5 754.5,273.1 755.5,273.7 756.5,274.2 757.5,274.7 758.5,275.3 759.5,275.7 760.5,276.2 761.5,276.7 762.5,277.1 763.4,277.5 899.0,277.5" fill="none" stroke="#de2c32" stroke-width="1" stroke-linejoin="round"/><polyline points="597.5,54.5 655.5,54.5 655.5,54.5 656.5,57.5 657.5,60.5 658.5,63.5 659.5,66.4 660.5,69.2 661.5,72.0 662.5,74.8 663.5,77.4 664.5,80.1 665.5,82.6 666.5,85.2 667.5,87.7 668.5,90.1 669.5,92.6 670.5,95.0 671.5,97.4 672.5,99.7 673.5,102.1 674.5,104.4 675.5,106.8 676.5,109.1 677.5,111.4 678.5,113.7 679.5,116.0 680.5,118.2 681.5,120.4 682.5,122.6 683.5,124.7 684.5,126.8 685.5,128.8 686.5,130.8 687.5,132.7 688.5,134.6 689.5,136.5 690.5,138.4 691.5,140.2 692.5,142.0 693.5,143.8 694.5,145.6 695.5,147.3 696.5,149.1 697.5,150.8 698.5,152.6 699.5,154.3 700.5,156.0 701.5,157.8 702.5,159.5 703.5,161.2 704.5,163.0 705.5,164.7 706.5,166.4 707.5,168.0 708.5,169.7 709.5,171.4 710.5,173.0 711.5,174.6 712.5,176.2 713.5,177.7 714.5,179.3 715.5,180.7 716.5,182.2 717.5,183.7 718.5,185.2 719.5,186.6 720.5,188.0 721.5,189.5 722.5,190.9 723.5,192.2 724.5,193.6 725.5,195.0 726.5,196.3 727.5,197.6 728.5,198.9 729.5,200.2 730.5,201.4 731.5,202.7 732.5,203.9 733.5,205.0 734.5,206.2 735.5,207.3 736.5,208.4 737.5,209.5 738.5,210.6 739.5,211.7 740.5,212.7 741.5,213.8 742.5,214.8 743.5,215.8 744.5,216.8 745.5,217.8 746.5,218.8 747.5,219.8 748.5,220.7 749.5,221.7 750.5,222.6 751.5,223.5 752.5,224.4 753.5,225.3 754.5,226.2 755.5,227.1 756.5,227.9 757.5,228.8 758.5,229.6 759.5,230.4 760.5,231.2 761.5,232.0 762.5,232.8 763.5,233.6 764.5,234.3 765.5,235.1 766.5,235.8 767.5,236.5 768.5,237.2 769.5,237.9 770.5,238.6 771.5,239.3 772.5,240.0 773.5,240.6 774.5,241.3 775.5,241.9 776.5,242.6 777.5,243.2 778.5,243.8 779.5,244.4 780.5,245.0 781.5,245.6 782.5,246.2 783.5,246.8 784.5,247.4 785.5,247.9 786.5,248.5 787.5,249.1 788.5,249.6 789.5,250.1 790.5,250.7 791.5,251.2 792.5,251.7 793.5,252.2 794.5,252.8 795.5,253.3 796.5,253.8 797.5,254.3 798.5,254.8 799.5,255.3 800.5,255.8 801.5,256.2 802.5,256.7 803.5,257.2 804.5,257.7 805.5,258.2 806.5,258.6 807.5,259.1 808.5,259.6 809.5,260.1 810.5,260.5 811.5,261.0 812.5,261.5 813.5,261.9 814.5,262.4 815.5,262.8 816.5,263.3 817.5,263.7 818.5,264.1 819.5,264.6 820.5,265.0 821.5,265.4 822.5,265.8 823.5,266.2 824.5,266.6 825.5,267.0 826.5,267.4 827.5,267.8 828.5,268.2 829.5,268.6 830.5,269.0 831.5,269.4 832.5,269.8 833.5,270.1 834.5,270.5 835.5,270.9 836.5,271.2 837.5,271.5 838.5,271.9 839.5,272.2 840.5,272.5 841.5,272.8 842.5,273.1 843.5,273.4 844.5,273.7 845.5,274.0 846.5,274.3 847.5,274.5 848.5,274.8 849.5,275.1 850.5,275.3 851.5,275.6 852.5,275.8 853.5,276.1 854.5,276.3 855.5,276.5 856.5,276.8 857.5,277.0 858.5,277.2 859.5,277.4 859.9,277.5 899.0,277.5" fill="none" stroke="#54e85a" stroke-width="1" stroke-linejoin="round"/><polyline points="597.5,570.5 654.5,570.5 655.5,568.0 655.5,470.0 656.5,440.0 656.5,339.0 657.5,336.8 659.5,336.8 660.5,338.5 688.5,338.5 688.5,338.5 689.5,340.5 690.5,342.5 691.5,344.5 692.5,346.5 693.5,348.5 694.5,350.7 695.5,353.0 696.5,355.1 697.5,357.0 698.5,358.6 699.5,360.1 700.5,361.5 701.5,362.8 702.5,364.0 703.5,365.2 704.5,366.4 705.5,367.5 706.5,368.6 707.5,369.6 708.5,370.7 709.5,371.6 710.5,372.5 711.5,373.4 712.5,374.3 713.5,375.1 714.5,375.9 715.5,376.7 716.5,377.5 717.5,378.3 718.5,379.0 719.5,379.8 720.5,380.5 721.5,381.3 722.5,382.0 723.5,382.7 724.5,383.5 725.5,384.2 726.5,384.9 727.5,385.6 728.5,386.3 729.5,387.0 730.5,387.7 731.5,388.3 732.5,389.0 733.5,389.6 734.5,390.3 735.5,390.9 736.5,391.5 737.5,392.2 738.5,392.8 739.5,393.4 740.5,394.0 741.5,394.6 742.5,395.2 743.5,395.7 744.5,396.3 745.5,396.8 746.5,397.4 747.5,397.9 748.5,398.4 749.5,398.9 750.5,399.3 751.5,399.8 752.5,400.3 753.5,400.8 754.5,401.3 755.5,401.8 756.5,402.3 757.5,402.9 758.5,403.5 759.5,404.1 760.5,404.8 761.5,405.5 762.5,406.2 763.3,406.8 763.5,420.0 764.5,420.0 764.5,434.0 765.4,424.9 766.3,432.4 767.2,425.9 768.1,431.5 769.0,426.6 769.9,430.9 770.8,427.2 771.7,430.4 772.6,427.6 773.5,430.0 774.4,427.9 775.3,429.7 776.2,428.2 777.1,429.5 778.0,428.4 778.9,429.4 779.8,428.5 780.7,429.3 781.6,428.6 782.5,429.2 783.4,428.7 784.3,429.1 785.2,428.7 786.1,429.0 787.0,428.8 800.0,428.9 840.0,429.5 899.0,429.5" fill="none" stroke="#de2c32" stroke-width="1" stroke-linejoin="round"/><polyline points="597.5,570.5 653.5,570.5 654.5,568.0 655.5,556.0 655.5,414.5 655.5,414.6 656.5,414.6 657.5,414.6 658.5,414.6 659.5,414.7 660.5,414.7 661.5,414.7 662.5,414.7 663.5,414.7 664.5,414.7 665.5,414.7 666.5,414.8 667.5,414.8 668.5,414.8 669.5,414.8 670.5,414.8 671.5,414.8 672.5,414.8 673.5,414.9 674.5,414.9 675.5,414.9 676.5,414.9 677.5,414.9 678.5,414.9 679.5,415.0 680.5,415.0 681.5,415.0 682.5,415.0 683.5,415.0 684.5,415.0 685.5,415.1 686.5,415.1 687.5,415.1 688.5,415.1 689.5,415.1 690.5,415.1 691.5,415.2 692.5,415.2 693.5,415.2 694.5,415.2 695.5,415.2 696.5,415.2 697.5,415.3 698.5,415.3 699.5,415.3 700.5,415.3 701.5,415.3 702.5,415.3 703.5,415.4 704.5,415.4 705.5,415.4 706.5,415.4 707.5,415.4 708.5,415.5 709.5,415.5 710.5,415.5 711.5,415.5 712.5,415.5 713.5,415.6 714.5,415.6 715.5,415.6 716.5,415.6 717.5,415.6 718.5,415.7 719.5,415.7 720.5,415.7 721.5,415.7 722.5,415.7 723.5,415.8 724.5,415.8 725.5,415.8 726.5,415.8 727.5,415.8 728.5,415.9 729.5,415.9 730.5,415.9 731.5,415.9 732.5,416.0 733.5,416.0 734.5,416.0 735.5,416.0 736.5,416.0 737.5,416.1 738.5,416.1 739.5,416.1 740.5,416.1 741.5,416.1 742.5,416.2 743.5,416.2 744.5,416.2 745.5,416.2 746.5,416.2 747.5,416.2 748.5,416.3 749.5,416.3 750.5,416.3 751.5,416.3 752.5,416.3 753.5,416.4 754.5,416.4 755.5,416.4 756.5,416.4 757.5,416.4 758.5,416.5 759.5,416.5 760.5,416.5 761.5,416.5 762.5,416.5 763.5,416.5 764.5,416.6 765.5,416.6 766.5,416.6 767.5,416.6 768.5,416.6 769.5,416.7 770.5,416.7 771.5,416.7 772.5,416.7 773.5,416.7 774.5,416.7 775.5,416.8 776.5,416.8 777.5,416.8 778.5,416.8 779.5,416.8 780.5,416.9 781.5,416.9 782.5,416.9 783.5,416.9 784.5,416.9 785.5,416.9 786.5,417.0 787.5,417.0 788.5,417.0 789.5,417.0 790.5,417.0 791.5,417.0 792.5,417.1 793.5,417.1 794.5,417.1 795.5,417.1 796.5,417.1 797.5,417.1 798.5,417.2 799.5,417.2 800.5,417.2 801.5,417.2 802.5,417.2 803.5,417.2 804.5,417.2 805.5,417.2 806.5,417.2 807.5,417.3 808.5,417.3 809.5,417.3 810.5,417.3 811.5,417.3 812.5,417.3 813.5,417.3 814.5,417.3 815.5,417.3 816.5,417.3 817.5,417.3 818.5,417.3 819.5,417.3 820.5,417.4 821.5,417.4 822.5,417.4 823.5,417.4 824.5,417.4 825.5,417.4 826.5,417.4 827.5,417.4 828.5,417.4 829.5,417.4 830.5,417.4 831.5,417.5 832.5,417.5 833.5,417.5 834.5,417.5 835.5,417.5 836.5,417.5 837.5,417.5 838.5,417.5 839.5,417.6 840.5,417.6 841.5,417.6 842.5,417.6 843.5,417.6 844.5,417.7 845.5,417.7 846.5,417.7 847.5,417.7 848.5,417.7 849.5,417.8 850.5,417.8 851.5,417.8 852.5,417.9 853.5,417.9 854.5,417.9 855.5,417.9 856.5,418.0 857.5,418.0 858.5,418.1 859.5,418.3 860.5,418.6 861.5,420.0 862.5,424.0 863.5,429.0 863.6,432.2 864.2,428.1 864.8,430.7 865.4,428.5 866.0,430.4 866.6,428.7 867.2,430.2 867.8,428.9 868.4,430.0 869.0,429.1 869.6,429.9 870.2,429.2 870.8,429.8 871.4,429.3 872.0,429.7 872.6,429.3 873.2,429.7 873.8,429.4 874.4,429.6 875.0,429.4 875.6,429.6 876.2,429.4 876.8,429.6 877.4,429.4 878.0,429.6 899.0,429.5" fill="none" stroke="#54e85a" stroke-width="1" stroke-linejoin="round"/><polyline points="597.5,824.5 656.5,824.5 657.0,824.5 657.5,824.5 658.0,824.5 658.5,824.5 659.0,824.5 659.5,824.5 660.0,824.5 660.5,824.5 661.0,824.5 661.5,824.5 662.0,824.5 662.5,824.5 663.0,824.5 663.5,824.5 664.0,824.5 664.5,824.5 665.0,824.5 665.5,824.5 666.0,824.5 666.5,824.5 667.0,824.5 667.5,824.5 668.0,824.5 668.5,824.5 669.0,824.5 669.5,824.5 670.0,824.5 670.5,824.5 671.0,824.5 671.5,824.5 672.0,824.5 672.5,824.4 673.0,824.3 673.5,824.1 674.0,823.9 674.5,823.7 675.0,823.5 675.5,823.2 676.0,822.9 676.5,822.4 677.0,821.8 677.5,821.2 678.0,820.1 678.5,818.5 679.0,816.5 679.5,814.4 680.0,812.3 680.5,810.1 681.0,807.6 681.5,804.7 682.0,801.0 682.5,796.6 683.0,791.4 683.5,785.6 684.0,779.2 684.5,772.2 685.0,763.9 685.5,753.9 686.0,743.1 686.5,731.7 687.0,720.5 687.5,710.0 688.0,699.5 688.5,688.4 689.0,678.9 689.5,673.2 690.0,669.8 690.4,668.5 690.8,665.3 691.3,674.3 691.7,667.3 692.2,674.2 692.6,666.9 693.0,675.7 693.5,670.0 693.9,674.7 694.4,671.2 694.8,675.8 695.2,672.3 695.7,676.5 696.1,672.3 696.6,676.9 697.0,673.3 697.4,678.1 697.9,675.4 698.3,678.7 698.8,676.0 699.2,679.2 699.6,677.0 700.1,680.3 700.5,677.9 701.0,680.5 701.4,678.8 701.8,681.8 702.3,680.0 702.7,682.1 703.2,680.9 703.6,683.5 704.0,681.4 704.5,684.0 704.9,682.5 705.4,684.9 705.8,683.7 704.8,683.5 705.8,684.4 706.8,685.3 707.8,686.2 708.8,687.1 709.8,688.0 710.8,688.9 711.8,689.8 712.8,690.7 713.8,691.6 714.8,692.5 715.8,693.4 716.8,694.3 717.8,695.3 718.8,696.2 719.8,697.1 720.8,698.0 721.8,698.9 722.8,699.7 723.8,700.6 724.8,701.4 725.8,702.2 726.8,703.0 727.8,703.8 728.8,704.6 729.8,705.4 730.8,706.2 731.8,707.0 732.8,707.8 733.8,708.6 734.8,709.4 735.8,710.2 736.8,711.0 737.8,711.8 738.8,712.6 739.8,713.4 740.8,714.2 741.8,715.0 742.8,715.8 743.8,716.5 744.8,717.3 745.8,718.1 746.8,718.8 747.8,719.5 748.8,720.3 749.8,721.0 750.8,721.7 751.8,722.4 752.8,723.1 753.8,723.9 754.8,724.6 755.8,725.3 756.8,726.0 757.8,726.8 758.8,727.7 759.8,728.6 760.8,729.7 761.8,731.1 762.8,733.4 763.6,737.0 763.6,760.0 764.5,762.0 764.5,837.0 765.4,821.4 766.3,825.2 767.2,822.2 768.1,824.6 769.0,822.6 769.9,824.2 770.8,823.0 771.7,823.9 772.6,823.1 773.5,823.8 774.4,823.3 775.3,823.7 776.2,823.4 899.0,823.5" fill="none" stroke="#de2c32" stroke-width="1" stroke-linejoin="round"/><polyline points="597.5,824.5 655.5,824.5 655.5,610.0 656.5,604.0 656.5,671.0 656.5,618.0 657.5,619.0 657.5,648.0 657.5,631.0 657.5,631.0 658.5,632.6 659.5,634.0 660.5,635.2 661.5,636.3 662.5,637.3 663.5,638.2 664.5,639.1 665.5,639.9 666.5,640.7 667.5,641.5 668.5,642.2 669.5,642.9 670.5,643.5 671.5,644.2 672.5,644.9 673.5,645.5 674.5,646.2 675.5,646.9 676.5,647.5 677.5,648.2 678.5,648.8 679.5,649.5 680.5,650.1 681.5,650.7 682.5,651.4 683.5,652.0 684.5,652.6 685.5,653.2 686.5,653.8 687.5,654.5 688.5,655.1 689.5,655.7 690.5,656.3 691.5,656.9 692.5,657.5 693.5,658.1 694.5,658.7 695.5,659.3 696.5,659.8 697.5,660.4 698.5,661.0 699.5,661.6 700.5,662.2 701.5,662.8 702.5,663.3 703.5,663.9 704.5,664.5 705.5,665.1 706.5,665.7 707.5,666.2 708.5,666.8 709.5,667.4 710.5,667.9 711.5,668.5 712.5,669.0 713.5,669.6 714.5,670.1 715.5,670.7 716.5,671.2 717.5,671.7 718.5,672.2 719.5,672.7 720.5,673.2 721.5,673.7 722.5,674.2 723.5,674.7 724.5,675.1 725.5,675.6 726.5,676.0 727.5,676.5 728.5,676.9 729.5,677.3 730.5,677.8 731.5,678.2 732.5,678.6 733.5,679.0 734.5,679.4 735.5,679.8 736.5,680.2 737.5,680.6 738.5,681.1 739.5,681.5 740.5,681.9 741.5,682.3 742.5,682.7 743.5,683.1 744.5,683.5 745.5,684.0 746.5,684.4 747.5,684.8 748.5,685.2 749.5,685.7 750.5,686.1 751.5,686.6 752.5,687.0 753.5,687.4 754.5,687.9 755.5,688.3 756.5,688.7 757.5,689.2 758.5,689.6 759.5,690.0 760.5,690.5 761.5,690.9 762.5,691.3 763.5,691.7 764.5,692.2 765.5,692.6 766.5,693.0 767.5,693.4 768.5,693.8 769.5,694.1 770.5,694.5 771.5,694.9 772.5,695.3 773.5,695.6 774.5,696.0 775.5,696.3 776.5,696.7 777.5,697.0 778.5,697.4 779.5,697.7 780.5,698.1 781.5,698.4 782.5,698.7 783.5,699.1 784.5,699.4 785.5,699.7 786.5,700.1 787.5,700.4 788.5,700.8 789.5,701.1 790.5,701.4 791.5,701.8 792.5,702.1 793.5,702.5 794.5,702.8 795.5,703.2 796.5,703.5 797.5,703.9 798.5,704.2 799.5,704.6 800.5,704.9 801.5,705.3 802.5,705.6 803.5,706.0 804.5,706.3 805.5,706.7 806.5,707.0 807.5,707.4 808.5,707.7 809.5,708.1 810.5,708.4 811.5,708.8 812.5,709.2 813.5,709.5 814.5,709.9 815.5,710.2 816.5,710.6 817.5,710.9 818.5,711.2 819.5,711.6 820.5,711.9 821.5,712.3 822.5,712.6 823.5,712.9 824.5,713.2 825.5,713.6 826.5,713.9 827.5,714.2 828.5,714.5 829.5,714.9 830.5,715.2 831.5,715.5 832.5,715.9 833.5,716.2 834.5,716.6 835.5,716.9 836.5,717.3 837.5,717.7 838.5,718.1 839.5,718.4 840.5,718.9 841.5,719.3 842.5,719.7 843.5,720.1 844.5,720.6 845.5,721.0 846.5,721.5 847.5,722.0 848.5,722.5 849.5,723.0 850.5,723.6 851.5,724.1 852.5,724.7 853.5,725.4 854.5,726.0 855.5,726.7 856.5,727.5 857.5,728.5 858.5,729.6 859.5,731.2 860.5,734.0 861.5,741.2 861.6,742.0 861.8,780.0 862.5,782.0 862.5,825.5 863.4,822.3 864.3,824.5 865.2,822.7 866.1,824.1 867.0,823.0 867.9,823.9 868.8,823.2 869.7,823.7 870.6,823.3 871.5,823.6 872.4,823.4 899.0,823.5" fill="none" stroke="#54e85a" stroke-width="1" stroke-linejoin="round"/></g><g font-family="'Liberation Sans',sans-serif" font-weight="bold"><text x="589" y="55.3" fill="#bfbfb8" font-size="13.5" textLength="35.8" lengthAdjust="spacingAndGlyphs" text-anchor="end">1.0KA</text><text x="589" y="78.3" fill="#bfbfb8" font-size="13.5" textLength="35.8" lengthAdjust="spacingAndGlyphs" text-anchor="end">0.9KA</text><text x="589" y="100.3" fill="#bfbfb8" font-size="13.5" textLength="35.8" lengthAdjust="spacingAndGlyphs" text-anchor="end">0.8KA</text><text x="589" y="123.3" fill="#bfbfb8" font-size="13.5" textLength="35.8" lengthAdjust="spacingAndGlyphs" text-anchor="end">0.7KA</text><text x="589" y="146.3" fill="#bfbfb8" font-size="13.5" textLength="35.8" lengthAdjust="spacingAndGlyphs" text-anchor="end">0.6KA</text><text x="589" y="169.3" fill="#bfbfb8" font-size="13.5" textLength="35.8" lengthAdjust="spacingAndGlyphs" text-anchor="end">0.5KA</text><text x="589" y="191.3" fill="#bfbfb8" font-size="13.5" textLength="35.8" lengthAdjust="spacingAndGlyphs" text-anchor="end">0.4KA</text><text x="589" y="214.3" fill="#bfbfb8" font-size="13.5" textLength="35.8" lengthAdjust="spacingAndGlyphs" text-anchor="end">0.3KA</text><text x="589" y="237.3" fill="#bfbfb8" font-size="13.5" textLength="35.8" lengthAdjust="spacingAndGlyphs" text-anchor="end">0.2KA</text><text x="589" y="260.3" fill="#bfbfb8" font-size="13.5" textLength="35.8" lengthAdjust="spacingAndGlyphs" text-anchor="end">0.1KA</text><text x="589" y="282.3" fill="#bfbfb8" font-size="13.5" textLength="35.8" lengthAdjust="spacingAndGlyphs" text-anchor="end">0.0KA</text><text x="589" y="305.3" fill="#bfbfb8" font-size="13.5" textLength="40.2" lengthAdjust="spacingAndGlyphs" text-anchor="end">-0.1KA</text><text x="638.8" y="45.4" fill="#ee161c" font-size="14.5" textLength="66.5" lengthAdjust="spacingAndGlyphs">I(R_prüf_1)</text><text x="789.6" y="45.4" fill="#24ee3c" font-size="14.5" textLength="66.7" lengthAdjust="spacingAndGlyphs">I(R_prüf_2)</text><text x="589" y="326.3" fill="#bfbfb8" font-size="13.5" textLength="30.2" lengthAdjust="spacingAndGlyphs" text-anchor="end">700V</text><text x="589" y="351.3" fill="#bfbfb8" font-size="13.5" textLength="30.2" lengthAdjust="spacingAndGlyphs" text-anchor="end">630V</text><text x="589" y="376.3" fill="#bfbfb8" font-size="13.5" textLength="30.2" lengthAdjust="spacingAndGlyphs" text-anchor="end">560V</text><text x="589" y="401.3" fill="#bfbfb8" font-size="13.5" textLength="30.2" lengthAdjust="spacingAndGlyphs" text-anchor="end">490V</text><text x="589" y="426.3" fill="#bfbfb8" font-size="13.5" textLength="30.2" lengthAdjust="spacingAndGlyphs" text-anchor="end">420V</text><text x="589" y="451.3" fill="#bfbfb8" font-size="13.5" textLength="30.2" lengthAdjust="spacingAndGlyphs" text-anchor="end">350V</text><text x="589" y="477.3" fill="#bfbfb8" font-size="13.5" textLength="30.2" lengthAdjust="spacingAndGlyphs" text-anchor="end">280V</text><text x="589" y="502.3" fill="#bfbfb8" font-size="13.5" textLength="30.2" lengthAdjust="spacingAndGlyphs" text-anchor="end">210V</text><text x="589" y="527.3" fill="#bfbfb8" font-size="13.5" textLength="30.2" lengthAdjust="spacingAndGlyphs" text-anchor="end">140V</text><text x="589" y="552.3" fill="#bfbfb8" font-size="13.5" textLength="23.1" lengthAdjust="spacingAndGlyphs" text-anchor="end">70V</text><text x="589" y="577.3" fill="#bfbfb8" font-size="13.5" textLength="15.9" lengthAdjust="spacingAndGlyphs" text-anchor="end">0V</text><text x="629.6" y="315.8" fill="#ee161c" font-size="14.5" textLength="86" lengthAdjust="spacingAndGlyphs">V(collektor_1)</text><text x="780" y="315.8" fill="#24ee3c" font-size="14.5" textLength="86.2" lengthAdjust="spacingAndGlyphs">V(collektor_2)</text><text x="589" y="598.3" fill="#bfbfb8" font-size="13.5" textLength="27.2" lengthAdjust="spacingAndGlyphs" text-anchor="end">3.0A</text><text x="589" y="621.3" fill="#bfbfb8" font-size="13.5" textLength="27.2" lengthAdjust="spacingAndGlyphs" text-anchor="end">2.7A</text><text x="589" y="644.3" fill="#bfbfb8" font-size="13.5" textLength="27.2" lengthAdjust="spacingAndGlyphs" text-anchor="end">2.4A</text><text x="589" y="667.3" fill="#bfbfb8" font-size="13.5" textLength="27.2" lengthAdjust="spacingAndGlyphs" text-anchor="end">2.1A</text><text x="589" y="690.3" fill="#bfbfb8" font-size="13.5" textLength="27.2" lengthAdjust="spacingAndGlyphs" text-anchor="end">1.8A</text><text x="589" y="713.3" fill="#bfbfb8" font-size="13.5" textLength="27.2" lengthAdjust="spacingAndGlyphs" text-anchor="end">1.5A</text><text x="589" y="737.3" fill="#bfbfb8" font-size="13.5" textLength="27.2" lengthAdjust="spacingAndGlyphs" text-anchor="end">1.2A</text><text x="589" y="760.3" fill="#bfbfb8" font-size="13.5" textLength="27.2" lengthAdjust="spacingAndGlyphs" text-anchor="end">0.9A</text><text x="589" y="783.3" fill="#bfbfb8" font-size="13.5" textLength="27.2" lengthAdjust="spacingAndGlyphs" text-anchor="end">0.6A</text><text x="589" y="806.3" fill="#bfbfb8" font-size="13.5" textLength="27.2" lengthAdjust="spacingAndGlyphs" text-anchor="end">0.3A</text><text x="589" y="829.3" fill="#bfbfb8" font-size="13.5" textLength="27.2" lengthAdjust="spacingAndGlyphs" text-anchor="end">0.0A</text><text x="589" y="852.3" fill="#bfbfb8" font-size="13.5" textLength="31.5" lengthAdjust="spacingAndGlyphs" text-anchor="end">-0.3A</text><text x="659.1" y="587.8" fill="#ee161c" font-size="14.5" textLength="27.5" lengthAdjust="spacingAndGlyphs">I(D1)</text><text x="802.7" y="587.8" fill="#24ee3c" font-size="14.5" textLength="41.7" lengthAdjust="spacingAndGlyphs">I(D1_2)</text><text x="597.2" y="868" fill="#bfbfb8" font-size="13" textLength="19.4" lengthAdjust="spacingAndGlyphs" text-anchor="middle">0µs</text><text x="662.2" y="868" fill="#bfbfb8" font-size="13" textLength="19.8" lengthAdjust="spacingAndGlyphs" text-anchor="middle">8µs</text><text x="728.2" y="868" fill="#bfbfb8" font-size="13" textLength="27.6" lengthAdjust="spacingAndGlyphs" text-anchor="middle">16µs</text><text x="793.2" y="868" fill="#bfbfb8" font-size="13" textLength="27.8" lengthAdjust="spacingAndGlyphs" text-anchor="middle">24µs</text><text x="859.2" y="868" fill="#bfbfb8" font-size="13" textLength="27.2" lengthAdjust="spacingAndGlyphs" text-anchor="middle">32µs</text></g></svg>
</body></html>
